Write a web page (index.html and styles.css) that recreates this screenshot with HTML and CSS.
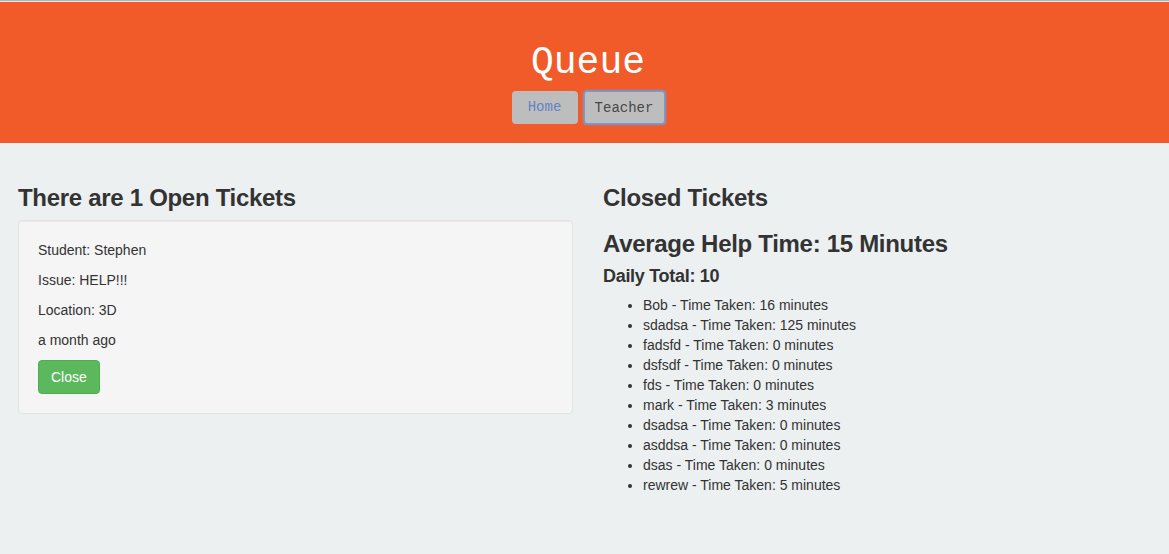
FILE: index.html
```html
<!DOCTYPE html>
<html lang="en">
<head>
<meta charset="utf-8">
<title>Queue</title>
<link rel="stylesheet" href="styles.css">
</head>
<body>
<div class="topline"></div>
<header class="banner">
  <h1 class="title">Queue</h1>
  <nav class="nav">
    <button class="navbtn navbtn-home">Home</button>
    <button class="navbtn navbtn-teacher">Teacher</button>
  </nav>
</header>
<main class="content">
  <section class="col">
    <h3 class="heading">There are 1 Open Tickets</h3>
    <div class="well">
      <p class="line">Student: Stephen</p>
      <p class="line">Issue: HELP!!!</p>
      <p class="line">Location: 3D</p>
      <p class="line">a month ago</p>
      <button class="btn-close">Close</button>
    </div>
  </section>
  <section class="col">
    <h3 class="heading">Closed Tickets</h3>
    <h3 class="heading heading-avg">Average Help Time: 15 Minutes</h3>
    <h4 class="subheading">Daily Total: 10</h4>
    <ul class="list">
      <li>Bob - Time Taken: 16 minutes</li>
      <li>sdadsa - Time Taken: 125 minutes</li>
      <li>fadsfd - Time Taken: 0 minutes</li>
      <li>dsfsdf - Time Taken: 0 minutes</li>
      <li>fds - Time Taken: 0 minutes</li>
      <li>mark - Time Taken: 3 minutes</li>
      <li>dsadsa - Time Taken: 0 minutes</li>
      <li>asddsa - Time Taken: 0 minutes</li>
      <li>dsas - Time Taken: 0 minutes</li>
      <li>rewrew - Time Taken: 5 minutes</li>
    </ul>
  </section>
</main>
</body>
</html>
```
FILE: styles.css
```css
html, body {
  margin: 0;
  padding: 0;
}
body {
  background: #ecf0f1;
  color: #333;
  font-family: "Liberation Sans", Arial, sans-serif;
  font-size: 14px;
  line-height: 20px;
}
.topline {
  height: 1px;
  background: #b4b4b4;
}
.banner {
  background: #f15a29;
  border-top: 1px solid #e8e8e8;
  padding: 41px 0 19px 7px;
  text-align: center;
}
.title {
  margin: 0 0 8px;
  font-family: "Liberation Mono", "Courier New", monospace;
  font-weight: normal;
  font-size: 38px;
  line-height: 40px;
  color: #fff;
}
.nav {
  display: flex;
  justify-content: center;
  gap: 5px;
}
.navbtn {
  height: 33px;
  border: 0;
  border-radius: 4px;
  background: #bdbdbd;
  font-family: "Liberation Mono", "Courier New", monospace;
  font-size: 14px;
  line-height: 33px;
  padding: 0;
  text-align: center;
}
.navbtn-home {
  width: 66px;
  color: #5f84c4;
}
.navbtn-teacher {
  width: 81px;
  color: #484848;
  border: 1px solid #6c9ddd;
  box-shadow: 0 0 2px 1px rgba(110, 160, 225, 0.9);
  border-radius: 3px;
  margin-left: 1px;
}
.content {
  display: grid;
  grid-template-columns: 555px 555px;
  column-gap: 30px;
  padding: 42px 0 0 18px;
}
.heading {
  margin: 0 0 9px;
  font-size: 24px;
  line-height: 26.4px;
  font-weight: bold;
  letter-spacing: -0.3px;
}
.heading-avg {
  margin-top: 20px;
}
.subheading {
  margin: 8px 0 8px;
  font-size: 18px;
  line-height: 19.8px;
  font-weight: bold;
  letter-spacing: -0.3px;
}
.well {
  background: #f5f5f5;
  border: 1px solid #e3e3e3;
  border-radius: 4px;
  box-shadow: inset 0 1px 1px rgba(0, 0, 0, 0.05);
  padding: 19px;
}
.line {
  margin: 0 0 10px;
}
.btn-close {
  display: block;
  height: 34px;
  padding: 6px 12px;
  border: 1px solid #4cae4c;
  border-radius: 4px;
  background: #5cb85c;
  color: #fff;
  font-family: "Liberation Sans", Arial, sans-serif;
  font-size: 14px;
  line-height: 20px;
}
.list {
  margin: 0 0 10px;
  padding-left: 40px;
}
```
